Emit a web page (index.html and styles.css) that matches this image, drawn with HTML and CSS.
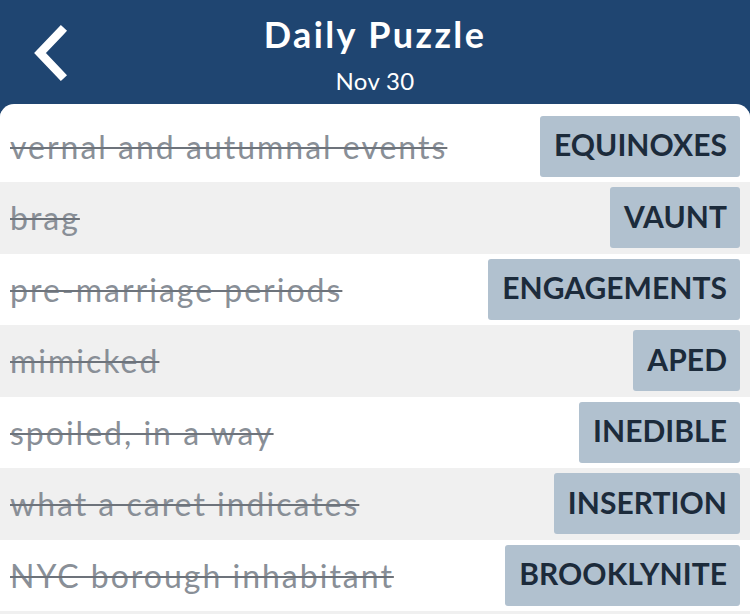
FILE: index.html
```html
<!DOCTYPE html>
<html>
<head>
<meta charset="utf-8">
<link rel="stylesheet" href="styles.css">
</head>
<body>
<div class="app">
  <header class="header">
    <button class="back" aria-label="Back">
      <svg width="40" height="56" viewBox="0 0 40 56"><path d="M31 6 L10 28 L31 50" fill="none" stroke="#fff" stroke-width="8.5" stroke-linecap="square" stroke-linejoin="miter"/></svg>
    </button>
    <div class="titles">
      <div class="title">Daily Puzzle</div>
      <div class="date">Nov 30</div>
    </div>
  </header>
  <main class="panel">
    <div class="row"><span class="clue">vernal and autumnal events</span><span class="answer">EQUINOXES</span></div>
    <div class="row alt"><span class="clue">brag</span><span class="answer">VAUNT</span></div>
    <div class="row"><span class="clue">pre-marriage periods</span><span class="answer">ENGAGEMENTS</span></div>
    <div class="row alt"><span class="clue">mimicked</span><span class="answer">APED</span></div>
    <div class="row"><span class="clue">spoiled, in a way</span><span class="answer">INEDIBLE</span></div>
    <div class="row alt"><span class="clue">what a caret indicates</span><span class="answer">INSERTION</span></div>
    <div class="row"><span class="clue">NYC borough inhabitant</span><span class="answer">BROOKLYNITE</span></div>
    <div class="row alt"><span class="clue"></span></div>
  </main>
</div>
</body>
</html>
```
FILE: styles.css
```css
* { box-sizing: border-box; }
html, body { margin: 0; padding: 0; }
body {
  width: 750px;
  height: 614px;
  overflow: hidden;
  background: #1f4571;
  font-family: "Lato", "Open Sans", sans-serif;
}
.app { display: flex; flex-direction: column; height: 614px; }
.header {
  height: 104px;
  flex: none;
  background: #1f4571;
  position: relative;
  display: flex;
  justify-content: center;
}
.back {
  position: absolute;
  left: 30px;
  top: 25px;
  padding: 0;
  border: 0;
  background: none;
  display: flex;
}
.titles {
  display: flex;
  flex-direction: column;
  align-items: center;
  padding-top: 11px;
  color: #fff;
}
.title { font-size: 36px; font-weight: 700; line-height: 46px; letter-spacing: 2.4px; }
.date { font-size: 24px; line-height: 28px; margin-top: 10px; letter-spacing: 0.3px; }
.panel {
  flex: 1;
  background: #fff;
  border-radius: 14px 14px 0 0;
  padding-top: 6.5px;
  overflow: hidden;
}
.row {
  height: 71.5px;
  display: flex;
  align-items: center;
  justify-content: space-between;
  padding: 0 10px 0 10px;
  background: #fff;
}
.row.alt { background: #f0f0f0; }
.clue {
  font-size: 32px;
  letter-spacing: 2px;
  color: #898f97;
  text-decoration: line-through;
  text-decoration-thickness: 2px;
  text-decoration-color: #6d737b;
  white-space: nowrap;
}
.answer {
  height: 61px;
  display: flex;
  align-items: center;
  padding: 0 13px 4px 14px;
  background: #b1c1cf;
  border-radius: 3px;
  color: #1c2b3b;
  font-size: 30px;
  font-weight: 700;
  letter-spacing: 0.05px;
}
```
